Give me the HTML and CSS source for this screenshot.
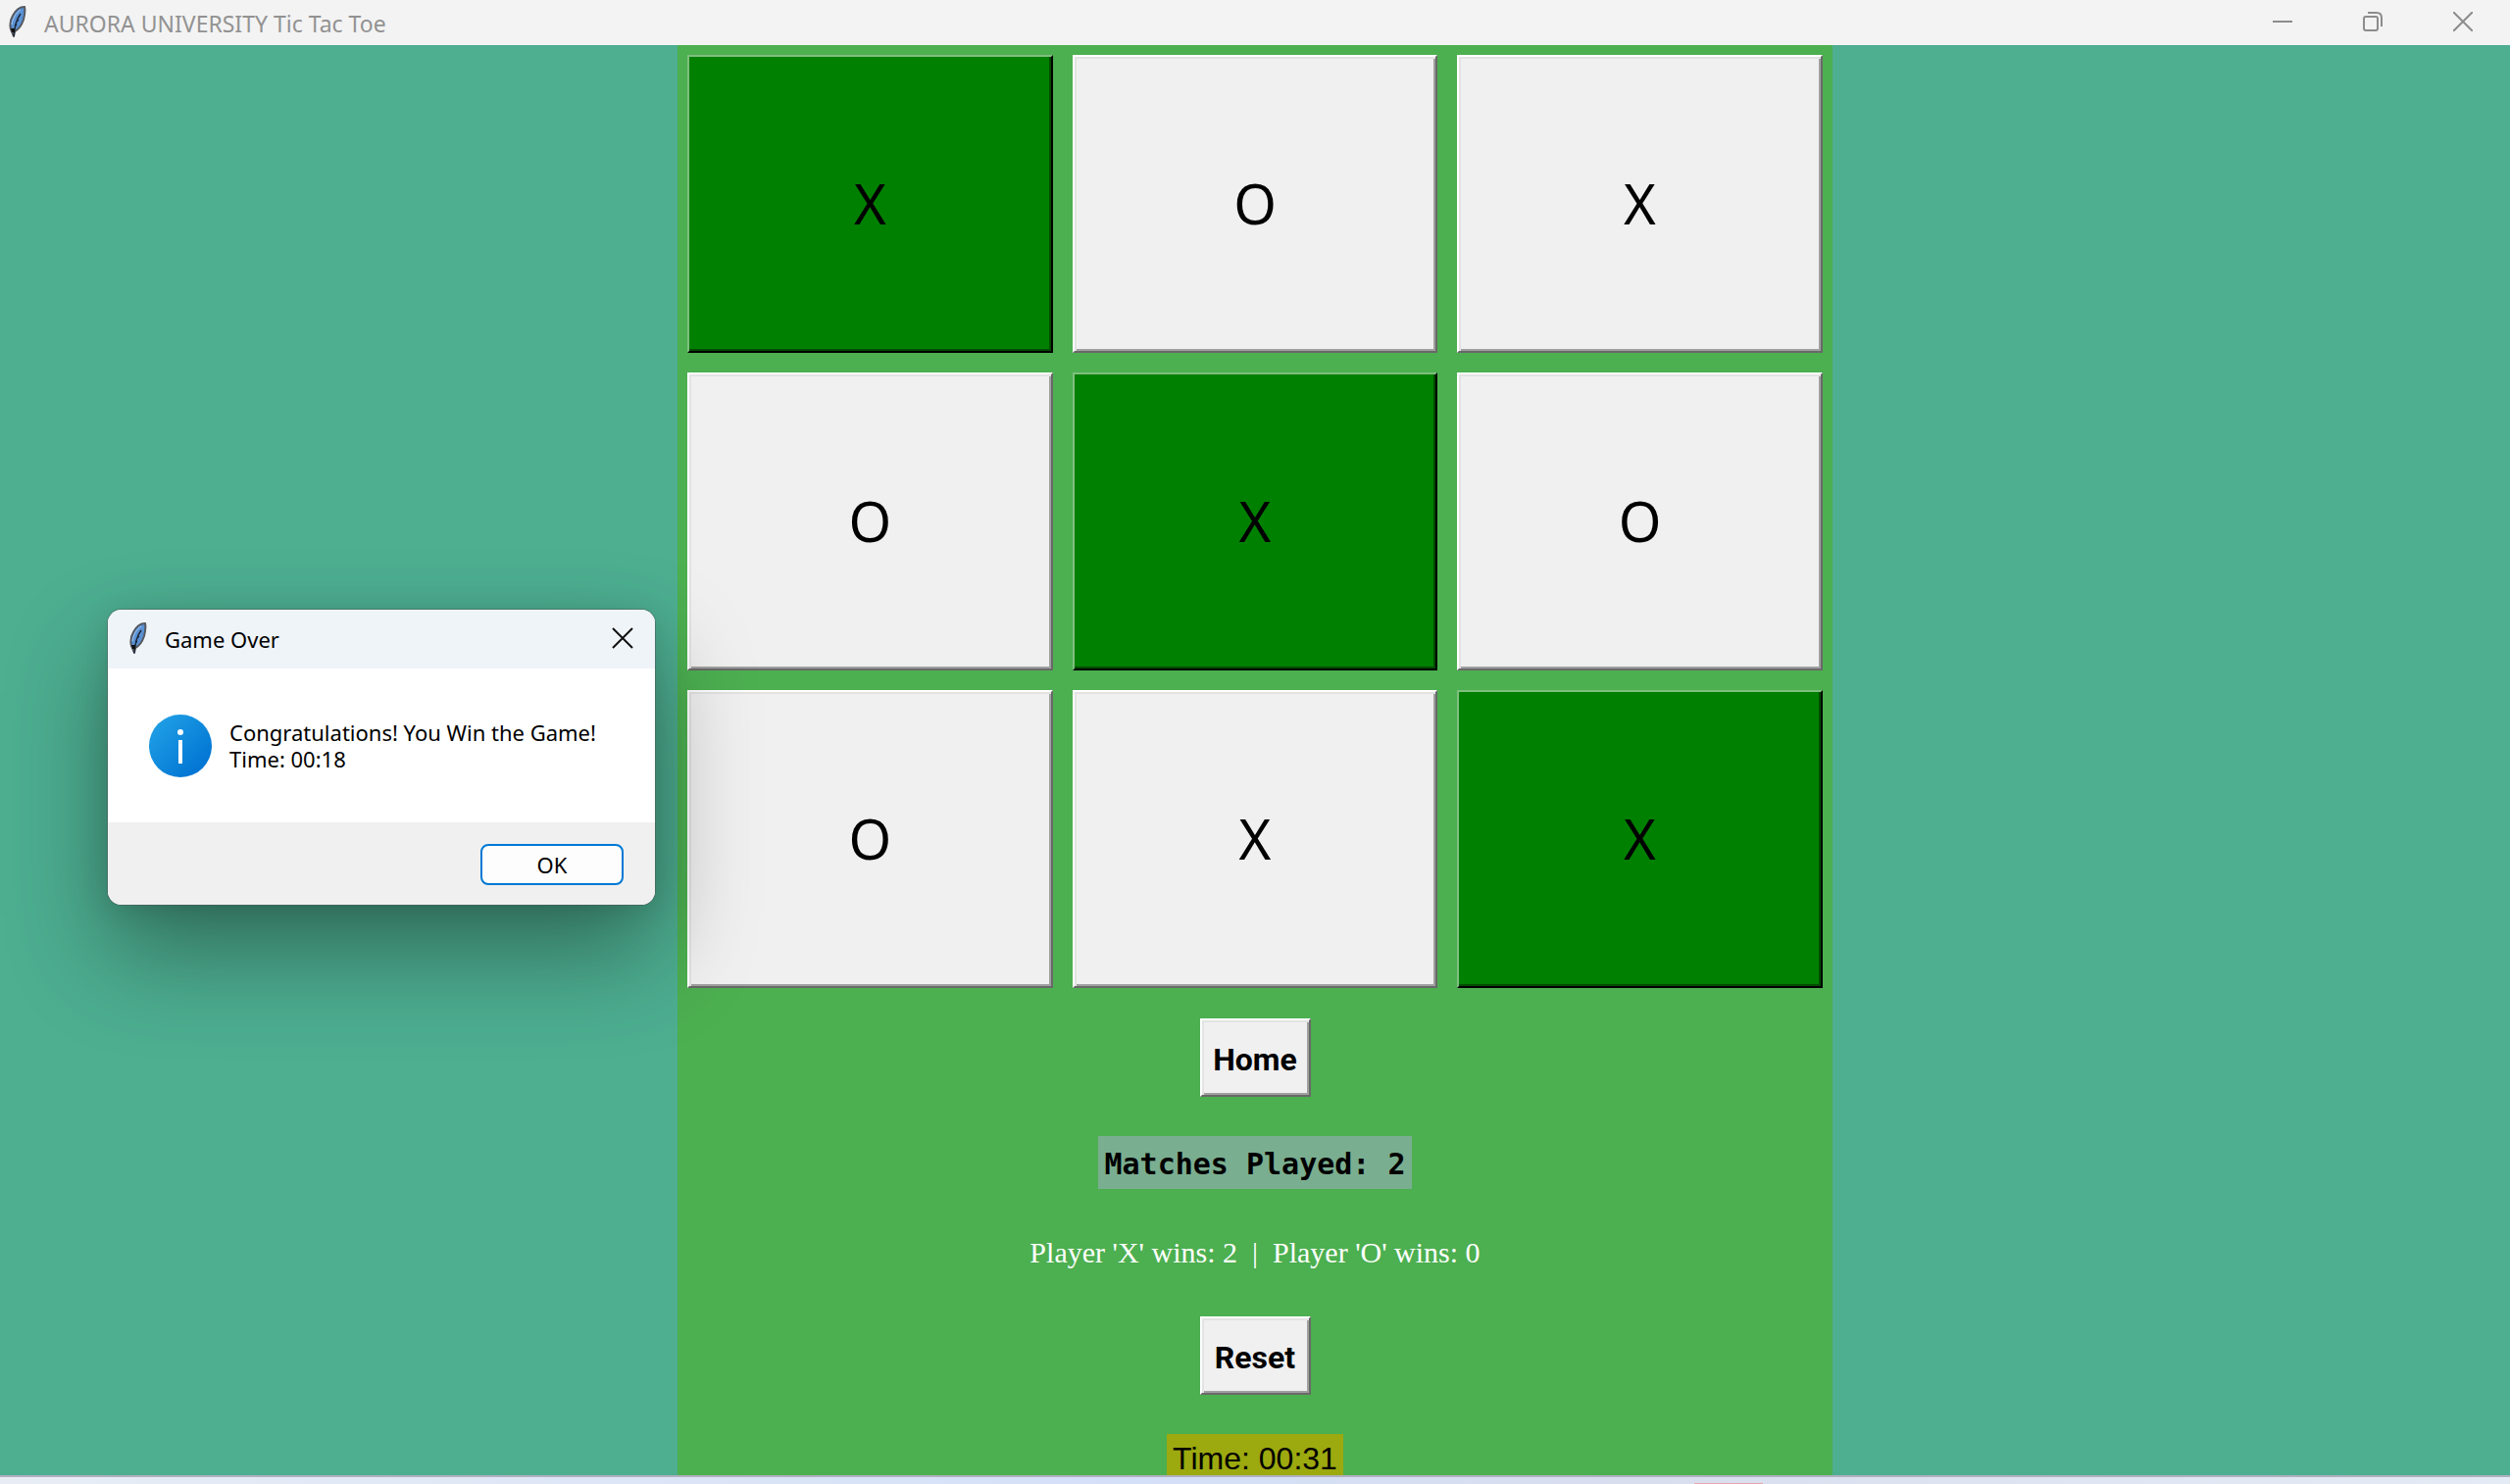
FILE: index.html
```html
<!DOCTYPE html>
<html lang="en">
<head>
<meta charset="utf-8">
<title>AURORA UNIVERSITY Tic Tac Toe</title>
<link rel="stylesheet" href="styles.css">
</head>
<body>
<svg class="defs" aria-hidden="true">
  <symbol id="feather" viewBox="0 0 18 32">
    <path d="M16 1C11 1 7 4 4 10C1 15 1 20 2 24L5 31L6 26C10 24 13 20 15 14C16 10 17 5 16 1Z" fill="#5a92d6" stroke="#55595f" stroke-width="2"/>
    <path d="M12 8C9 12 6 18 5 31M8 14L10 15M6 19L8 20" fill="none" stroke="#1c2735" stroke-width="1.5"/>
    <path d="M3 19C4 13 7 7 12 4" fill="none" stroke="#a9c8ec" stroke-width="1"/>
    <path d="M2 23L6 23L6 27L3 27Z" fill="#111"/>
  </symbol>
</svg>
<header class="titlebar">
  <svg class="feather" aria-hidden="true"><use href="#feather"/></svg>
  <h1 class="title">AURORA UNIVERSITY Tic Tac Toe</h1>
  <div class="controls">
    <button class="control" aria-label="Minimize"><svg width="20" height="20" viewBox="0 0 20 20"><path d="M0 10H20"/></svg></button>
    <button class="control" aria-label="Restore"><svg width="20" height="20" viewBox="0 0 20 20"><rect x="1" y="5" width="14" height="14" rx="2"/><path d="M5 1H14Q19 1 19 6V15"/></svg></button>
    <button class="control" aria-label="Close"><svg width="20" height="20" viewBox="0 0 20 20"><path d="M0 0L20 20M20 0L0 20"/></svg></button>
  </div>
</header>
<main class="desktop">
  <section class="game">
    <div class="board">
      <button class="cell win">X</button>
      <button class="cell">O</button>
      <button class="cell">X</button>
      <button class="cell">O</button>
      <button class="cell win">X</button>
      <button class="cell">O</button>
      <button class="cell">O</button>
      <button class="cell">X</button>
      <button class="cell win">X</button>
    </div>
    <button class="action">Home</button>
    <p class="matches">Matches Played: 2</p>
    <p class="wins">Player 'X' wins: 2&nbsp; |&nbsp; Player 'O' wins: 0</p>
    <button class="action">Reset</button>
    <p class="time">Time: 00:31</p>
  </section>
</main>
<footer class="taskbar"><span class="taskmark"></span></footer>
<section class="dialog" role="dialog" aria-labelledby="dialog-title">
  <header class="dialog-head">
    <svg class="feather" aria-hidden="true"><use href="#feather"/></svg>
    <h2 class="dialog-title" id="dialog-title">Game Over</h2>
    <button class="dialog-close" aria-label="Close"><svg width="22" height="22" viewBox="0 0 22 22"><path d="M1 1L21 21M21 1L1 21"/></svg></button>
  </header>
  <div class="dialog-body">
    <svg class="info" viewBox="0 0 64 64" aria-hidden="true">
      <defs><linearGradient id="blue" x1="0" y1="0" x2="1" y2="1"><stop offset="0.1" stop-color="#1f9fe5"/><stop offset="0.9" stop-color="#0072d2"/></linearGradient></defs>
      <circle cx="32" cy="32" r="32" fill="url(#blue)"/>
      <circle cx="32" cy="18" r="3" fill="#fff"/>
      <path d="M32 26V50" stroke="#fff" stroke-width="4"/>
    </svg>
    <p class="message">Congratulations! You Win the Game!<br>Time: 00:18</p>
  </div>
  <footer class="dialog-foot"><button class="ok">OK</button></footer>
</section>
</body>
</html>
```
FILE: styles.css
```css
* { box-sizing: border-box; }

body {
  margin: 0;
  height: 100vh;
  display: flex;
  flex-direction: column;
  overflow: hidden;
  background: #4dae90;
  color: #000;
  font-family: "Noto Sans", "Open Sans", sans-serif;
}

h1, h2, p { margin: 0; font-weight: 400; }

button { font-family: inherit; color: inherit; padding: 0; }

.defs { display: none; }

.feather { width: 18px; height: 32px; flex: none; }

.titlebar {
  flex: none;
  height: 46px;
  display: flex;
  align-items: center;
  gap: 18px;
  padding: 0 2px 2px 9px;
  background: #f3f3f3;
}

.title { font-size: 23px; line-height: 32px; color: #929292; padding-top: 4px; }

.controls { display: flex; margin-left: auto; }

.control {
  width: 92px;
  height: 44px;
  border: 0;
  background: none;
  display: grid;
  place-items: center;
}

.control svg, .dialog-close svg { fill: none; stroke: #8c8c8c; stroke-width: 2; }

.desktop {
  flex: 1;
  min-height: 0;
  overflow: hidden;
  display: flex;
  justify-content: center;
}

.game {
  width: 46%;
  display: flex;
  flex-direction: column;
  align-items: center;
  gap: 40px;
  background: #4caf50;
}

.game > * { flex: none; }

.board {
  width: 100%;
  display: grid;
  grid-template-columns: repeat(3, 1fr);
  grid-auto-rows: 304px;
  gap: 20px;
  padding: 10px 10px 0;
  margin-bottom: -9px;
}

.cell, .action {
  border: 2px solid;
  border-color: #fff #696969 #696969 #fff;
  background: #f0f0f0;
  box-shadow: inset 2px 2px #e3e3e3, inset -2px -2px #a0a0a0;
}

.cell { font-size: 56px; padding-bottom: 3px; }

.win {
  background: #008000;
  border-color: #7fbf7f #000 #000 #7fbf7f;
  box-shadow: inset -2px -2px #004c00;
}

.action {
  width: 113px;
  height: 80px;
  padding-top: 4px;
  font: 700 32px Roboto, sans-serif;
}

.matches {
  padding: 4px 6px 0;
  background: #7aae90;
  font: 700 30px/50px "DejaVu Sans Mono", monospace;
}

.wins { color: #fff; font: 30px/50px "Liberation Serif", serif; }

.time {
  padding: 0 6px;
  background: #9ca90f;
  font: 32px/50px "Liberation Sans", sans-serif;
}

.taskbar {
  flex: none;
  height: 9px;
  border-top: 2px solid #b0b0bf;
  background: linear-gradient(90deg, #e8edf5, #d4e0f8 45%, #d8deee 65%, #e5ebf5);
  display: flex;
  align-items: flex-end;
}

.taskmark { width: 70px; height: 1px; margin-left: 67.5%; background: #e8a6ac; }

.dialog {
  position: absolute;
  left: 110px;
  top: 622px;
  width: 558px;
  border-radius: 14px;
  overflow: hidden;
  background: #fff;
  box-shadow: 0 0 0 1px rgba(80, 90, 90, 0.5), 0 48px 100px rgba(0, 0, 0, 0.38), 0 4px 30px rgba(0, 0, 0, 0.12);
}

.dialog-head {
  height: 60px;
  display: flex;
  align-items: center;
  gap: 18px;
  padding: 0 22px 2px;
  background: #eff4f9;
}

.dialog-title { font-size: 22px; line-height: 32px; padding-top: 2px; }

.dialog-close {
  width: 22px;
  height: 22px;
  margin-left: auto;
  border: 0;
  background: none;
  display: grid;
}

.dialog-close svg { stroke: #111; }

.dialog-body {
  height: 157px;
  display: flex;
  align-items: center;
  gap: 18px;
  padding: 0 42px;
}

.info { width: 64px; height: 64px; flex: none; }

.message { font-size: 22px; line-height: 27px; white-space: nowrap; }

.dialog-foot {
  height: 84px;
  display: flex;
  align-items: center;
  justify-content: flex-end;
  padding: 2px 32px 0 0;
  background: #f0f0f0;
}

.ok {
  width: 146px;
  height: 42px;
  border: 2px solid #0078d4;
  border-radius: 8px;
  background: #fdfdfd;
  font-size: 22px;
  line-height: 32px;
}
```
